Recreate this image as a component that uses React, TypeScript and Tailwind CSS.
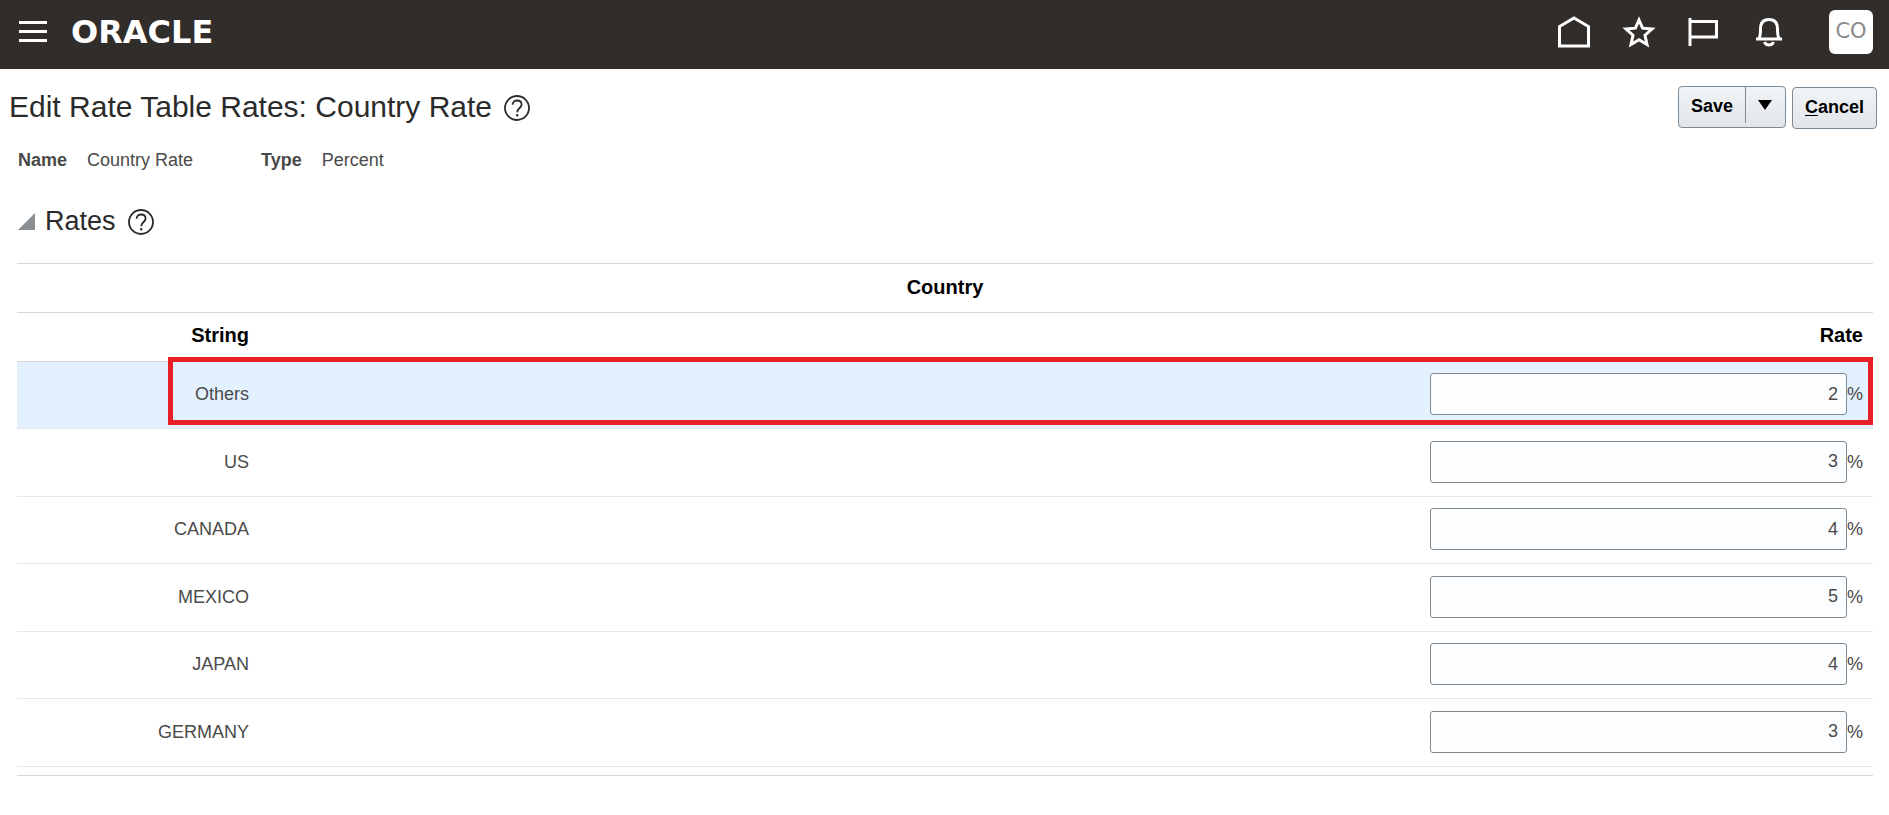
import type { ReactNode } from 'react';

const rates = [
  { name: 'Others', rate: 2 },
  { name: 'US', rate: 3 },
  { name: 'CANADA', rate: 4 },
  { name: 'MEXICO', rate: 5 },
  { name: 'JAPAN', rate: 4 },
  { name: 'GERMANY', rate: 3 },
];

function HelpButton({ label }: { label: string }) {
  return (
    <button type="button" aria-label={label} className="shrink-0 pt-0.5">
      <svg width="26" height="26" viewBox="0 0 26 26" fill="none" stroke="#2b2b2b" strokeWidth="1.8">
        <circle cx="13" cy="13" r="12" />
        <path d="M8.6 9.8c0-2.7 1.8-4.3 4.5-4.3s4.5 1.6 4.5 4c0 3.500-4.300 3.600-4.300 7.800" />
        <circle cx="13.2" cy="20.200" r="1.200" fill="#2b2b2b" stroke="none" />
      </svg>
    </button>
  );
}

function NavButton({ label, children }: { label: string; children: ReactNode }) {
  return (
    <button type="button" aria-label={label}>
      <svg width="36" height="36" viewBox="0 0 36 36" fill="none" stroke="#fff" strokeWidth="3">
        {children}
      </svg>
    </button>
  );
}

function Header() {
  return (
    <header className="flex h-[69px] items-start justify-between bg-[#312d2a] pl-[19px] pr-4">
      <div className="flex h-16 items-center gap-6">
        <button type="button" aria-label="Navigator">
          <svg width="28" height="22" viewBox="0 0 28 22" fill="#fff">
            <rect y="0" width="28" height="3" />
            <rect y="9" width="28" height="3" />
            <rect y="18" width="28" height="3" />
          </svg>
        </button>
        <a href="#" className="font-['DejaVu_Sans',sans-serif] text-[32px] font-bold leading-8 text-white">
          ORACLE
        </a>
      </div>
      <nav className="flex h-16 items-center gap-[29px]">
        <NavButton label="Home">
          <path d="M2.500 32V12.500L17 4l14.500 8.500V32z" />
        </NavButton>
        <NavButton label="Favorites">
          <path d="M17 6l3.600 8.200 9.400.8-7 6.200 2 9.300-8-4.800-8 4.800 2-9.300-7-6.200 9.400-.8z" />
        </NavButton>
        <NavButton label="Watchlist">
          <path d="M3 4v28M3 7.500h26.500v15.500h-26.500" />
        </NavButton>
        <NavButton label="Notifications">
          <path d="M4 25h26M7 24.500c1.500-2.500 1.500-5 1.500-9.500 0-6 3-9.500 8.500-9.500s8.500 3.500 8.500 9.500c0 4.500 0 7 1.500 9.500" />
          <path d="M12.500 28c1.500 4 7.500 4 9 0" />
        </NavButton>
        <button
          type="button"
          className="mb-px ml-3 size-11 rounded-md bg-white font-['DejaVu_Sans',sans-serif] text-[21px] text-[#8b8b8b]"
        >
          CO
        </button>
      </nav>
    </header>
  );
}

function Actions() {
  return (
    <div className="flex gap-1.5 text-lg font-bold text-black">
      <div className="flex h-[42px] rounded border border-[#7b8a95] bg-gradient-to-b from-[#f1f4f6] to-[#e2e6e9]">
        <button type="button" className="px-3 pb-0.5">
          Save
        </button>
        <button
          type="button"
          aria-label="More save options"
          className="mb-1 flex w-10 items-center justify-center border-l border-[#7b8a95]"
        >
          <svg width="14" height="10" viewBox="0 0 14 10">
            <path d="M0 0h14L7 10z" />
          </svg>
        </button>
      </div>
      <button
        type="button"
        className="mt-px h-[42px] rounded border border-[#7b8a95] bg-gradient-to-b from-[#f1f4f6] to-[#e2e6e9] px-3 pb-0.5"
      >
        <span className="underline underline-offset-2">C</span>ancel
      </button>
    </div>
  );
}

function RatesTable() {
  return (
    <div className="relative ml-[17px] mr-4 mt-6 border-b border-[#d6d7d8] pb-2">
      <table className="w-full table-fixed border-collapse text-lg text-[#4a4a4a]">
        <colgroup>
          <col className="w-[242px]" />
          <col />
        </colgroup>
        <thead className="text-xl text-black">
          <tr className="h-[49px] border-y border-[#d6d7d8]">
            <th colSpan={2} className="pb-0.5">Country</th>
          </tr>
          <tr className="h-[49px] border-b border-[#d6d7d8] text-right">
            <th className="px-2.5 pb-1">String</th>
            <th className="px-2.5 pb-1">Rate</th>
          </tr>
        </thead>
        <tbody>
          {rates.map((row) => (
            <tr
              key={row.name}
              className="h-[67px] border-b border-[#e8e9ea] text-right first:bg-[#e3f1fe] even:h-[68px]"
            >
              <td className="px-2.5 pb-0.5">{row.name}</td>
              <td className="px-2.5 pb-0.5">
                <div className="flex items-center justify-end">
                  <input
                    type="text"
                    aria-label={`${row.name} rate`}
                    defaultValue={row.rate}
                    className="h-[42px] w-[417px] rounded-[3px] border border-[#7f8b93] bg-[#fcfdfe] px-2 text-right"
                  />
                  <span>%</span>
                </div>
              </td>
            </tr>
          ))}
        </tbody>
      </table>
      {/* Highlight around the first rate */}
      <div className="pointer-events-none absolute left-[151px] right-0 top-[94px] h-[68px] border-[5px] border-[#e81f26]" />
    </div>
  );
}

export default function App() {
  return (
    <div className="bg-white font-['Liberation_Sans',Arial,sans-serif]">
      <Header />
      <main>
        <div className="flex items-start justify-between pl-[9px] pr-3 pt-[17px]">
          <div className="flex items-center gap-3">
            <h1 className="text-[30px] leading-[42px] text-[#2b2b2b]">Edit Rate Table Rates: Country Rate</h1>
            <HelpButton label="Help for Edit Rate Table Rates" />
          </div>
          <Actions />
        </div>
        <dl className="flex px-[18px] pt-[17px] text-lg text-[#4a4a4a]">
          <dt className="font-bold">Name</dt>
          <dd className="ml-5">Country Rate</dd>
          <dt className="ml-[68px] font-bold">Type</dt>
          <dd className="ml-5">Percent</dd>
        </dl>
        <section>
          <div className="flex items-center pl-[18px] pt-[29px]">
            <button type="button" aria-label="Collapse Rates">
              <svg width="17" height="17" viewBox="0 0 17 17">
                <path d="M17 0v17H0z" fill="#8a8f93" />
              </svg>
            </button>
            <h2 className="ml-2.5 mr-3 text-[27px] leading-9 text-[#2b2b2b]">Rates</h2>
            <HelpButton label="Help for Rates" />
          </div>
          <RatesTable />
        </section>
      </main>
    </div>
  );
}
